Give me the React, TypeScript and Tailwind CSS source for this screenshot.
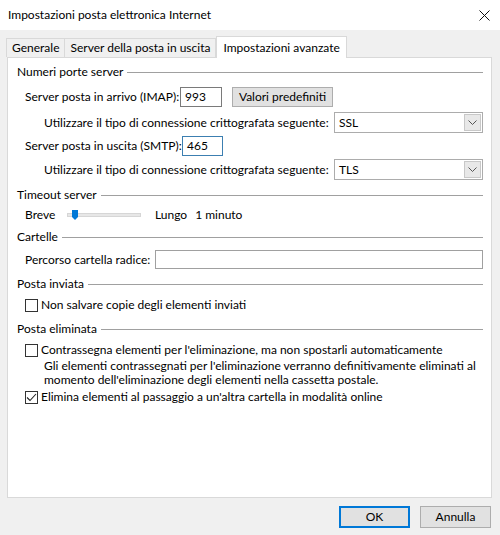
import React from "react";

const SectionHeader = ({ title, className = "" }: { title: string; className?: string }) => (
  <div className={`flex items-center h-[16px] pl-[9px] pr-[8px] ${className}`}>
    <span className="mr-[4px]">{title}</span>
    <div className="flex-1 h-px bg-[#a0a0a0]" />
  </div>
);

const Chevron = () => (
  <svg width="9" height="5" viewBox="0 0 9 5" fill="none">
    <path d="M0.5 0.5 L4.5 4.5 L8.5 0.5" stroke="#555" strokeWidth="1" />
  </svg>
);

const Select = ({ value }: { value: string }) => (
  <div className="ml-auto mr-[8px] w-[149px] h-[21px] border border-[#acacac] bg-white flex items-center shrink-0">
    <span className="pl-[4px] flex-1">{value}</span>
    <div className="w-[17px] h-[17px] mr-[1px] border border-[#c8c8c8] bg-[#e8e8e8] flex items-center justify-center">
      <Chevron />
    </div>
  </div>
);

const Checkbox = ({ checked = false }: { checked?: boolean }) => (
  <div className="w-[13px] h-[13px] border border-[#333] bg-white flex items-center justify-center shrink-0">
    {checked && (
      <svg width="11" height="9" viewBox="0 0 11 9" fill="none">
        <path d="M1 4.5 L4 7.5 L10 1" stroke="#222" strokeWidth="1.1" />
      </svg>
    )}
  </div>
);

const Tab = ({ label, active = false }: { label: string; active?: boolean }) => (
  <div
    className={
      active
        ? "h-[22px] px-[6px] bg-white border border-b-0 border-[#d9d9d9] flex items-center -mb-px relative z-10"
        : "h-[19px] px-[5px] bg-[#f0f0f0] border border-b-0 border-[#d9d9d9] flex items-center mt-[3px] -ml-px first:ml-0"
    }
  >
    {label}
  </div>
);

export default function App() {
  return (
    <div
      className="w-[500px] h-[535px] bg-[#f0f0f0] text-[12px] text-black leading-none flex flex-col whitespace-nowrap"
      style={{ fontFamily: 'Lato, "Noto Sans", sans-serif' }}
    >
      {/* title bar */}
      <div className="h-[30px] bg-white flex items-center pl-[8px] pr-[10px] shrink-0">
        <span className="text-[12px]">Impostazioni posta elettronica Internet</span>
        <svg className="ml-auto" width="11" height="11" viewBox="0 0 11 11">
          <path d="M0.5 0.5 L10.5 10.5 M10.5 0.5 L0.5 10.5" stroke="#111" strokeWidth="1" />
        </svg>
      </div>

      {/* tabs */}
      <div className="flex items-end pl-[6px] mt-[5px] h-[22px] shrink-0">
        <Tab label="Generale" />
        <Tab label="Server della posta in uscita" />
        <Tab label="Impostazioni avanzate" active />
      </div>

      {/* panel */}
      <div className="ml-[7px] w-[485px] h-[441px] bg-white border border-[#d9d9d9] flex flex-col pt-[6px]">
        <SectionHeader title="Numeri porte server" />

        <div className="flex items-center mt-[7px] h-[20px] pl-[17px]">
          <span className="w-[155px] shrink-0">Server posta in arrivo (IMAP):</span>
          <div className="w-[42px] h-[20px] border border-[#7a7a7a] flex items-center pl-[4px]">993</div>
          <div className="ml-[10px] w-[101px] h-[20px] bg-[#e1e1e1] border border-[#adadad] flex items-center justify-center">
            Valori predefiniti
          </div>
        </div>

        <div className="flex items-center mt-[5px] h-[21px] pl-[36px]">
          <span>Utilizzare il tipo di connessione crittografata seguente:</span>
          <Select value="SSL" />
        </div>

        <div className="flex items-center mt-[3px] h-[20px] pl-[17px]">
          <span className="w-[157px] shrink-0">Server posta in uscita (SMTP):</span>
          <div className="w-[41px] h-[20px] border border-[#3c7fb1] flex items-center pl-[4px]">465</div>
        </div>

        <div className="flex items-center mt-[3px] h-[21px] pl-[36px]">
          <span>Utilizzare il tipo di connessione crittografata seguente:</span>
          <Select value="TLS" />
        </div>

        <SectionHeader title="Timeout server" className="mt-[7px]" />

        <div className="flex items-center mt-[4px] h-[16px] pl-[17px]">
          <span className="w-[42px]">Breve</span>
          <div className="relative w-[74px] h-[12px] flex items-center">
            <div className="w-full h-[4px] bg-[#e7e7e7] border border-[#d6d6d6]" />
            <svg className="absolute left-[5px] top-[1px]" width="6" height="10" viewBox="0 0 6 10">
              <path d="M0 0 H6 V7 L3 10 L0 7 Z" fill="#0078d7" />
            </svg>
          </div>
          <span className="ml-[14px]">Lungo</span>
          <span className="ml-[8px]">1 minuto</span>
        </div>

        <SectionHeader title="Cartelle" className="mt-[6px]" />

        <div className="flex items-center mt-[5px] h-[19px] pl-[17px] pr-[8px]">
          <span className="w-[130px] shrink-0">Percorso cartella radice:</span>
          <div className="flex-1 h-[19px] border border-[#a0a0a0]" />
        </div>

        <SectionHeader title="Posta inviata" className="mt-[7px]" />

        <div className="flex items-center mt-[5px] h-[16px] pl-[17px]">
          <Checkbox />
          <span className="ml-[3px]">Non salvare copie degli elementi inviati</span>
        </div>

        <SectionHeader title="Posta eliminata" className="mt-[8px]" />

        <div className="flex items-center mt-[5px] h-[16px] pl-[17px]">
          <Checkbox />
          <span className="ml-[3px]">
            Contrassegna elementi per l'eliminazione, ma non spostarli automaticamente
          </span>
        </div>

        <div className="mt-[1px] pl-[36px] leading-[14px]">
          <div>Gli elementi contrassegnati per l'eliminazione verranno definitivamente eliminati al</div>
          <div>momento dell'eliminazione degli elementi nella cassetta postale.</div>
        </div>

        <div className="flex items-center mt-[2px] h-[16px] pl-[17px]">
          <Checkbox checked />
          <span className="ml-[3px]">Elimina elementi al passaggio a un'altra cartella in modalità online</span>
        </div>
      </div>

      {/* buttons */}
      <div className="flex justify-end gap-[10px] pr-[9px] mt-[8px]">
        <div className="w-[71px] h-[22px] bg-[#e1e1e1] border-2 border-[#0078d7] flex items-center justify-center">
          OK
        </div>
        <div className="w-[71px] h-[22px] bg-[#e1e1e1] border border-[#adadad] flex items-center justify-center">
          Annulla
        </div>
      </div>
    </div>
  );
}
